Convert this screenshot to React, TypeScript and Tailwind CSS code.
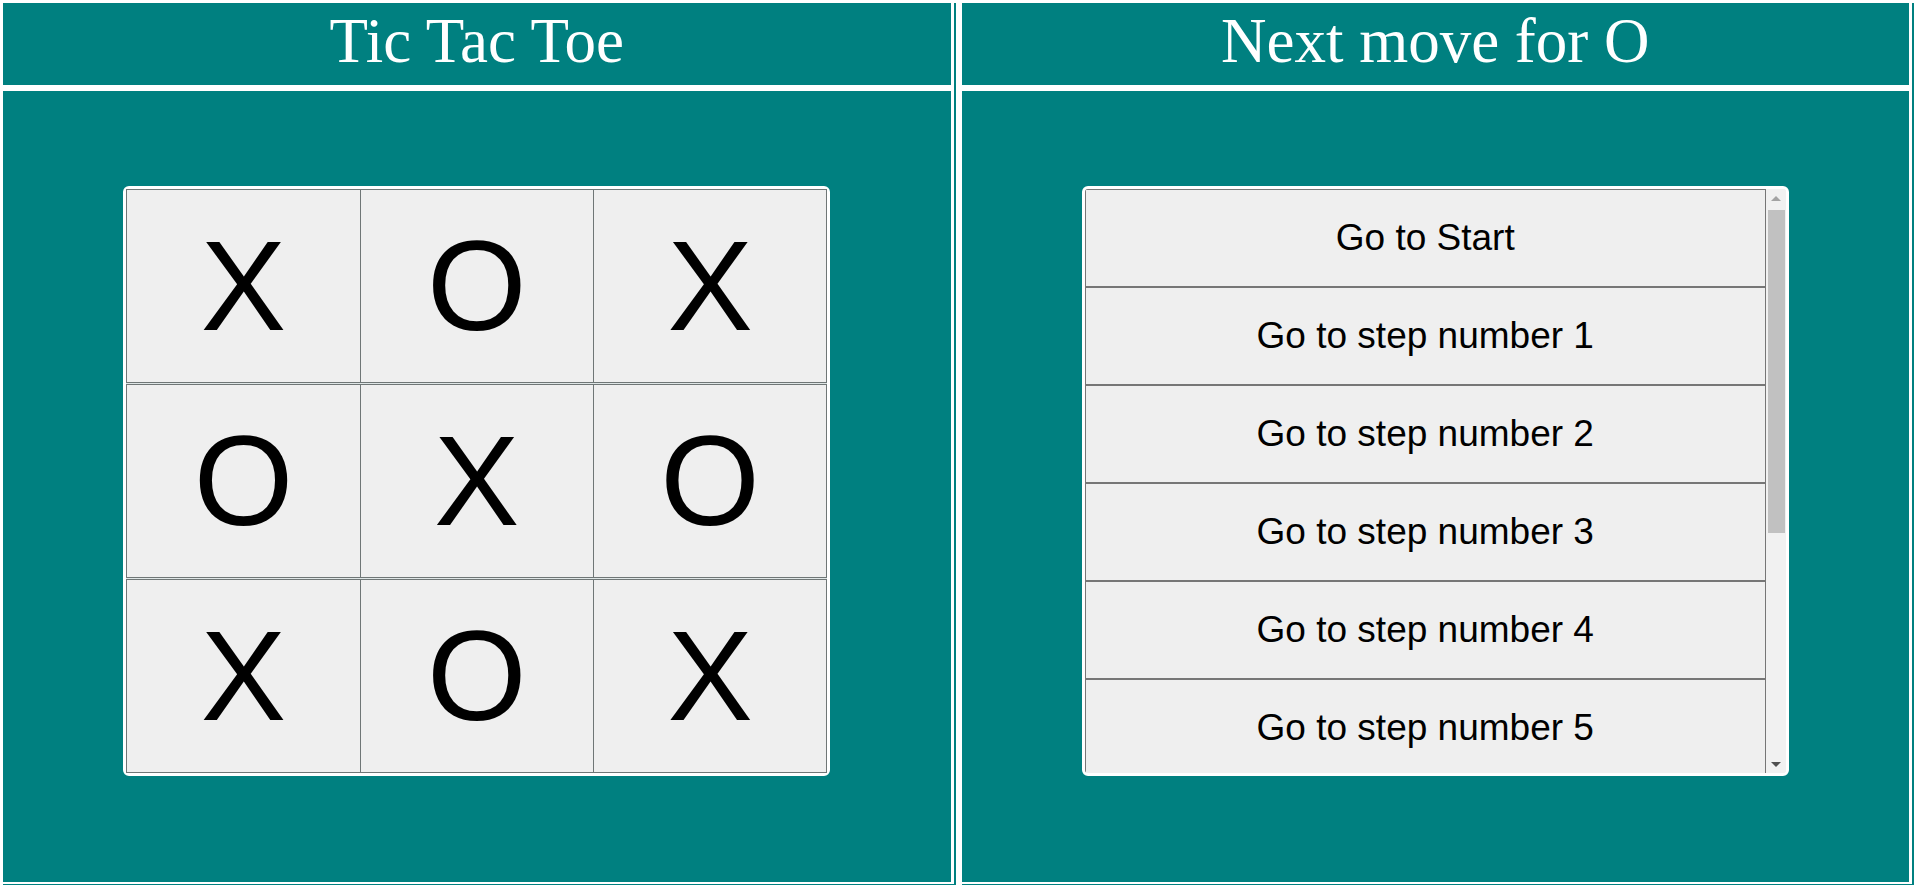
import React from "react";

const board = ["X", "O", "X", "O", "X", "O", "X", "O", "X"];

const moves = [
  "Go to Start",
  "Go to step number 1",
  "Go to step number 2",
  "Go to step number 3",
  "Go to step number 4",
  "Go to step number 5",
  "Go to step number 6",
  "Go to step number 7",
  "Go to step number 8",
  "Go to step number 9",
];

const Panel = ({ title, children }: { title: string; children: React.ReactNode }) => {
  return (
    <section className="flex flex-1 pl-[3px] pt-[3px] pr-[3px]">
      <div className="flex flex-1 flex-col border-b border-r-2 border-[#008080] pb-[2px] pr-[3px]">
        {/* Header */}
        <div className="h-[82px] bg-[#008080] pt-[7px] text-center">
          <h1 className="font-['Liberation_Serif',serif] text-[63px] leading-none text-white">{title}</h1>
        </div>
        {/* Body */}
        <div className="mt-[6px] flex flex-1 justify-center bg-[#008080] pt-[95px]">{children}</div>
      </div>
    </section>
  );
};

const Board = () => {
  const rows = [board.slice(0, 3), board.slice(3, 6), board.slice(6, 9)];
  return (
    <div className="flex h-[590px] w-[707px] flex-col gap-px rounded-[6px] border-[3px] border-white bg-[#dfe6e6]">
      {rows.map((row, r) => (
        <div key={r} className="flex flex-1">
          {row.map((v, c) => (
            <button
              key={c}
              className="-ml-px flex flex-1 items-center justify-center border border-[#6f7676] bg-[#efefef] font-['Liberation_Sans',Arial,sans-serif] text-[128px] leading-none text-black first:ml-0"
            >
              {v}
            </button>
          ))}
        </div>
      ))}
    </div>
  );
};

const Scrollbar = () => {
  return (
    <div className="flex w-[20px] flex-col bg-[#f1f1f1]">
      <div className="flex h-[18px] items-center justify-center pl-[1px]">
        <div className="h-0 w-0 border-x-[5px] border-b-[5px] border-x-transparent border-b-[#a3a3a3]" />
      </div>
      <div className="ml-[2px] mr-px mt-[3px] h-[323px] bg-[#c1c1c1]" />
      <div className="flex-1" />
      <div className="flex h-[18px] items-center justify-center pl-[1px]">
        <div className="h-0 w-0 border-x-[5px] border-t-[5px] border-x-transparent border-t-[#505050]" />
      </div>
    </div>
  );
};

const History = () => {
  return (
    <div className="flex h-[590px] w-[707px] overflow-hidden rounded-[6px] border-[3px] border-white bg-[#efefef]">
      <ol className="h-full flex-1 overflow-hidden">
        {moves.map((m) => (
          <li key={m}>
            <button className="h-[98px] w-full border border-[#767676] bg-[#efefef] font-['Liberation_Sans',Arial,sans-serif] text-[37px] text-black">
              {m}
            </button>
          </li>
        ))}
      </ol>
      <Scrollbar />
    </div>
  );
};

export default function App() {
  return (
    <div className="flex h-[885px] w-full overflow-hidden bg-white">
      <Panel title="Tic Tac Toe">
        <Board />
      </Panel>
      <Panel title="Next move for O">
        <History />
      </Panel>
    </div>
  );
}
